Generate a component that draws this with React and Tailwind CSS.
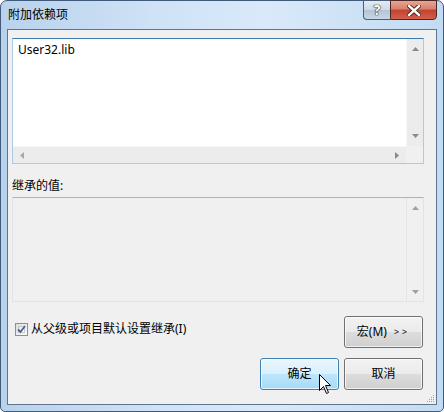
import React from "react";

const F = { fontFamily: '"Noto Sans", "Noto Sans CJK SC", sans-serif' };

function Arrow({ dir, color = "#8a8a8a" }) {
  const paths = {
    up: "M0 4 L3.5 0 L7 4 Z",
    down: "M0 0 L7 0 L3.5 4 Z",
    left: "M4 0 L4 7 L0 3.5 Z",
    right: "M0 0 L4 3.5 L0 7 Z",
  };
  const vert = dir === "up" || dir === "down";
  return (
    <svg width={vert ? 7 : 4} height={vert ? 4 : 7} viewBox={vert ? "0 0 7 4" : "0 0 4 7"}>
      <path d={paths[dir]} fill={color} />
    </svg>
  );
}

function Button({ children, active }) {
  return (
    <div
      className={
        "w-[79px] h-[32px] rounded-[3px] border flex items-center justify-center text-[12px] text-black relative overflow-hidden " +
        (active
          ? "border-[#3c7fb1] bg-[linear-gradient(#eaf6fd_0%,#d9f0fc_50%,#bee6fd_50%,#a7d9f5_100%)]"
          : "border-[#707070] bg-[linear-gradient(#f2f2f2_0%,#ebebeb_50%,#dddddd_50%,#cfcfcf_100%)]")
      }
      style={F}
    >
      <div className="absolute inset-0 rounded-[2px] border border-white/70" />
      <span className="relative flex items-center">{children}</span>
    </div>
  );
}

export default function App() {
  return (
    <div className="relative w-[444px] h-[412px] bg-white" style={F}>
      <div className="w-[444px] h-[412px] rounded-t-[7px] rounded-b-[5px] border border-[#3f5a7a] bg-[linear-gradient(90deg,#b9d2ec_0%,#cfe2f6_35%,#d9e9f9_60%,#c3dbf2_100%)] px-[6px] pb-[6px] flex flex-col">
        {/* Title bar */}
        <div className="h-[28px] flex items-start justify-between">
          <span className="pl-[1px] pt-[6px] text-[12px] leading-[16px] text-black">附加依赖项</span>
          <div className="flex -mt-px">
            <div className="w-[27px] h-[20px] rounded-bl-[4px] border border-r-0 border-[#4b5e78] bg-[linear-gradient(#e3ebf4_0%,#cdd9e6_50%,#b3c4d8_50%,#c9d6e5_100%)] flex items-center justify-center">
              <span className="text-[14px] font-bold leading-none text-white [text-shadow:0_0_1px_#222,0_0_1px_#222,0_0_1px_#222]">?</span>
            </div>
            <div className="w-[47px] h-[20px] rounded-br-[4px] border border-[#4b2a25] bg-[linear-gradient(#e8a493_0%,#d7806c_45%,#c2432e_50%,#d0604c_100%)] flex items-center justify-center">
              <svg width="14" height="11" viewBox="0 0 14 11">
                <path d="M2 1 L12 10 M12 1 L2 10" stroke="#3b1f1a" strokeWidth="4.2" strokeLinecap="square" />
                <path d="M2 1 L12 10 M12 1 L2 10" stroke="#ffffff" strokeWidth="2.4" strokeLinecap="square" />
              </svg>
            </div>
          </div>
        </div>

        {/* Client area */}
        <div className="relative flex-1 border border-[#61748d] bg-[#f0f0f0] flex flex-col">
          {/* List box */}
          <div className="mt-[8px] ml-[4px] w-[412px] h-[126px] border border-[#a9cbe6] border-t-[#3d7bad] bg-white flex flex-col">
            <div className="flex flex-1 min-h-0">
              <div className="flex-1 pl-[5px] pt-[3px] text-[12px] leading-[16px] text-black">User32.lib</div>
              <div className="w-[17px] bg-[#ececec] border-l border-[#f6f6f6] flex flex-col items-center justify-between py-[8px]">
                <Arrow dir="up" />
                <Arrow dir="down" />
              </div>
            </div>
            <div className="h-[17px] flex">
              <div className="flex-1 bg-[#ececec] border-t border-[#f6f6f6] flex items-center justify-between px-[7px]">
                <Arrow dir="left" color="#a8a8a8" />
                <Arrow dir="right" />
              </div>
              <div className="w-[17px] bg-[#f0f0f0]" />
            </div>
          </div>

          {/* Inherited label */}
          <div className="mt-[14px] ml-[4px] text-[12px] leading-[16px] text-black">继承的值:</div>

          {/* Inherited box */}
          <div className="mt-[3px] ml-[4px] w-[412px] h-[105px] border border-[#e2e3ea] border-t-[#adb2b5] bg-[#f0f0f0] flex">
            <div className="flex-1" />
            <div className="w-[17px] border-l border-[#e4e4e4] flex flex-col items-center justify-between pt-[8px] pb-[7px]">
              <Arrow dir="up" color="#a0a0a0" />
              <Arrow dir="down" color="#a0a0a0" />
            </div>
          </div>

          {/* Checkbox row + macro */}
          <div className="mt-[14px] flex items-start justify-between pr-[13px]">
            <div className="flex items-center ml-[7px] mt-[5px] gap-[3px]">
              <div className="w-[13px] h-[13px] border border-[#8e8f8f] bg-[linear-gradient(135deg,#dcdcdc,#fbfbfb)] p-[2px]">
                <div className="w-full h-full bg-[linear-gradient(135deg,#e6e6e6,#ffffff)] flex items-center justify-center border border-[#c8c8c8]">
                  <svg width="9" height="9" viewBox="0 0 9 9" className="-m-[2px]">
                    <path d="M1 4.5 L3.5 7 L8 1" stroke="#4a5f97" strokeWidth="1.8" fill="none" />
                  </svg>
                </div>
              </div>
              <span className="text-[12px] leading-[16px] text-black">从父级或项目默认设置继承(I)</span>
            </div>
            <Button>
              宏(M)<span className="ml-[7px] text-[9px] tracking-[3px]">&gt;&gt;</span>
            </Button>
          </div>

          {/* OK / Cancel */}
          <div className="mt-[10px] flex justify-end gap-[5px] pr-[13px]">
            <Button active>确定</Button>
            <Button>取消</Button>
          </div>

          {/* Size grip */}
          <svg className="absolute right-[1px] bottom-[1px]" width="9" height="9" viewBox="0 0 9 9">
            <g fill="#a0a0a0">
              <rect x="7" y="1" width="1" height="1" />
              <rect x="5" y="3" width="1" height="1" />
              <rect x="7" y="3" width="1" height="1" />
              <rect x="3" y="5" width="1" height="1" />
              <rect x="5" y="5" width="1" height="1" />
              <rect x="7" y="5" width="1" height="1" />
              <rect x="1" y="7" width="1" height="1" />
              <rect x="3" y="7" width="1" height="1" />
              <rect x="5" y="7" width="1" height="1" />
              <rect x="7" y="7" width="1" height="1" />
            </g>
          </svg>
        </div>
      </div>

      {/* Mouse cursor */}
      <svg className="absolute left-[319px] top-[374px]" width="13" height="21" viewBox="0 0 13 21">
        <path d="M0.5 0.5 L0.5 16.5 L4.5 12.5 L7.5 19.5 L9.5 18.5 L6.5 11.5 L11.5 11.5 Z" fill="#ffffff" stroke="#000000" strokeWidth="1" strokeLinejoin="miter" />
      </svg>
    </div>
  );
}
